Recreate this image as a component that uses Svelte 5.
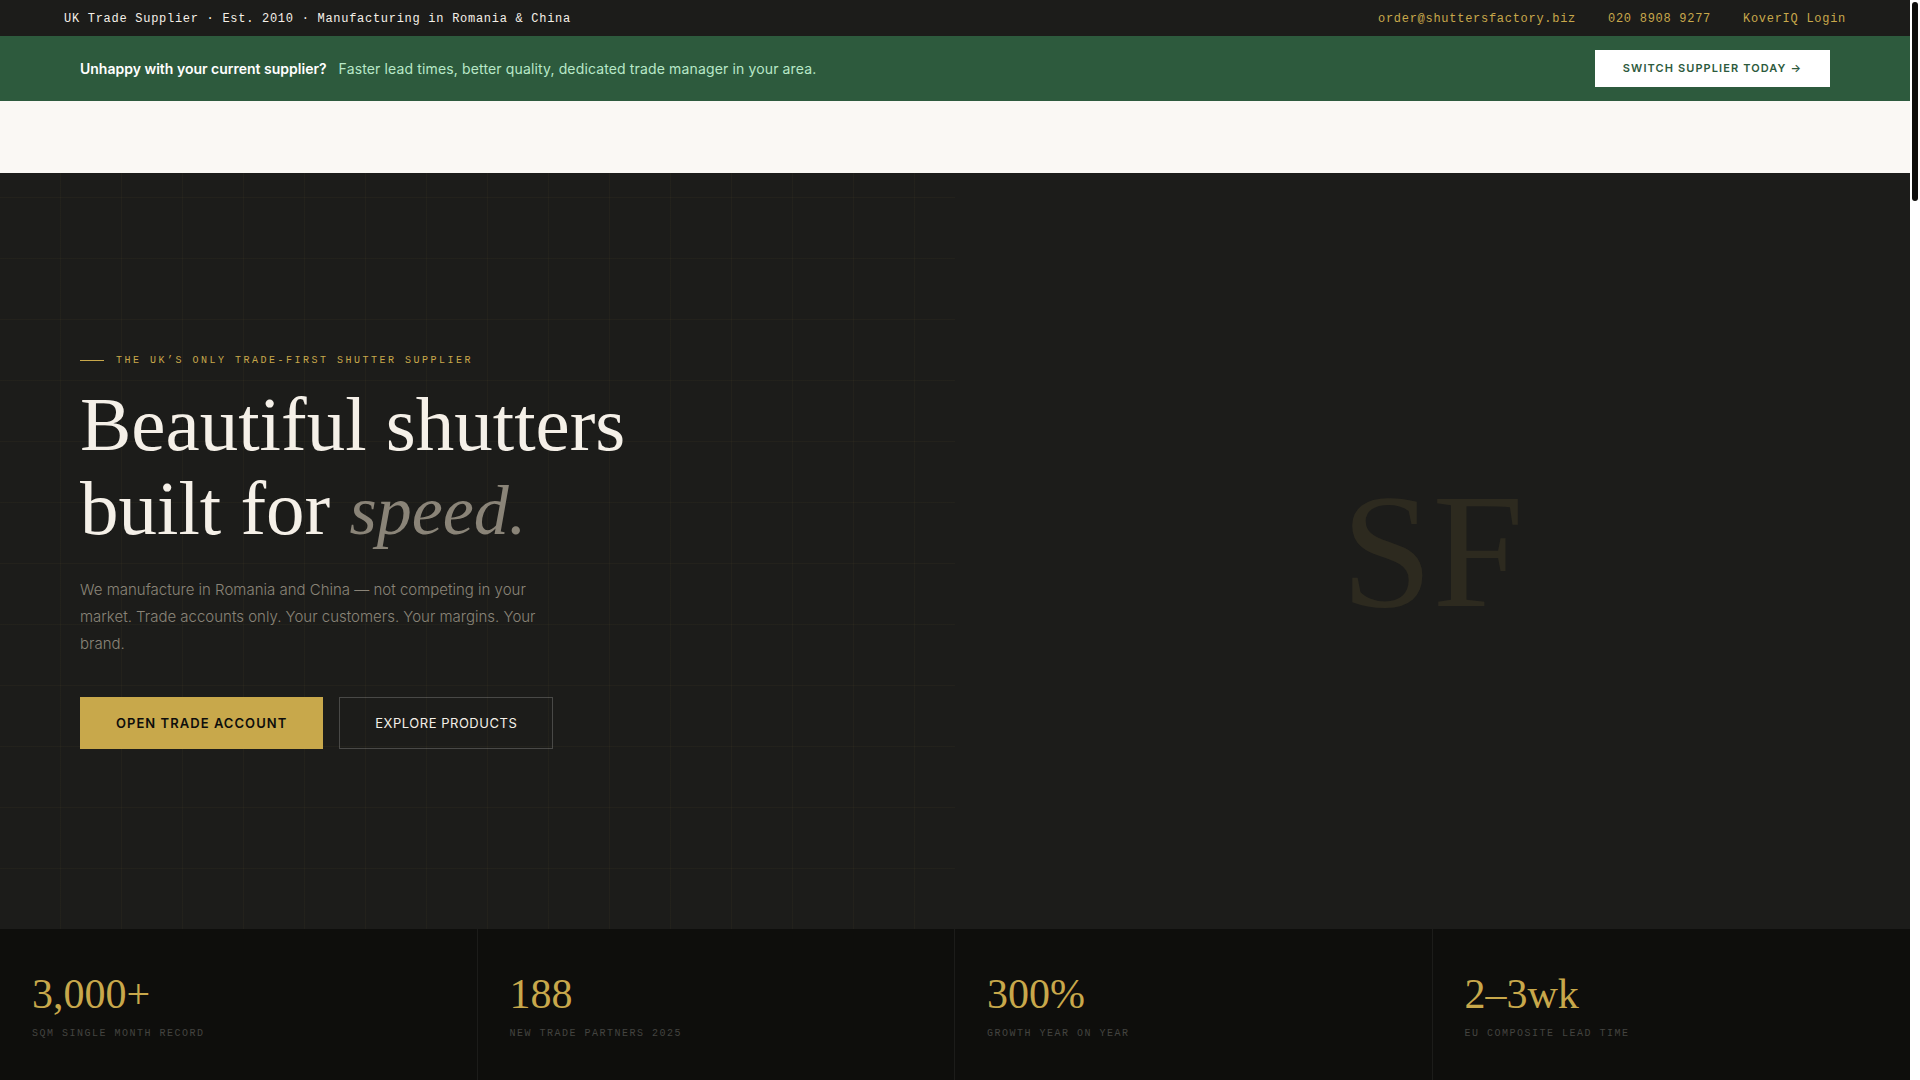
<script lang="ts">
  const contactLinks = [
    { label: 'order@shuttersfactory.biz', href: 'mailto:order@shuttersfactory.biz' },
    { label: '020 8908 9277', href: 'tel:02089089277' },
    { label: 'KoverIQ Login', href: '#login' },
  ];

  const stats = [
    { value: '3,000+', label: 'SQM single month record' },
    { value: '188', label: 'New trade partners 2025' },
    { value: '300%', label: 'Growth year on year' },
    { value: '2–3wk', label: 'EU composite lead time' },
  ];
</script>

<div class="shell">
  <div class="page">
    <div class="topbar">
      <span>UK Trade Supplier · Est. 2010 · Manufacturing in Romania &amp; China</span>
      <div class="topbar__links">
        {#each contactLinks as link}
          <a href={link.href}>{link.label}</a>
        {/each}
      </div>
    </div>

    <div class="switch">
      <p class="switch__text">
        <strong>Unhappy with your current supplier?</strong>
        <span>Faster lead times, better quality, dedicated trade manager in your area.</span>
      </p>
      <a class="switch__button" href="#switch">Switch supplier today →</a>
    </div>

    <header class="nav"></header>

    <section class="hero">
      <div class="hero__left">
        <div class="eyebrow">The UK’s only trade-first shutter supplier</div>
        <h1>Beautiful shutters<br />built for <em>speed.</em></h1>
        <p class="hero__sub">
          We manufacture in Romania and China — not competing in your market. Trade accounts only.
          Your customers. Your margins. Your brand.
        </p>
        <div class="hero__actions">
          <a class="btn btn--gold" href="#account">Open trade account</a>
          <a class="btn btn--outline" href="#products">Explore products</a>
        </div>
      </div>
      <div class="hero__right">
        <span class="monogram">SF</span>
      </div>
    </section>

    <section class="stats">
      {#each stats as stat}
        <div class="stat">
          <div class="stat__value">{stat.value}</div>
          <div class="stat__label">{stat.label}</div>
        </div>
      {/each}
    </section>
  </div>

  <div class="scroll" aria-hidden="true">
    <div class="scroll__thumb"></div>
  </div>
</div>

<style>
  :global(body) {
    background: #fff;
  }

  .shell {
    --ink: #1c1c1a;
    --black: #0e0e0c;
    --gold: #c8a84b;
    --cream: #f5f0e8;
    --muted: #8a8478;
    --sans: Inter, 'Open Sans', sans-serif;
    --serif: 'Liberation Serif', serif;
    --mono: 'Liberation Mono', monospace;

    display: grid;
    grid-template-columns: minmax(0, 1fr) 10px;
    min-height: 100vh;
    font-family: var(--sans);
  }

  a {
    text-decoration: none;
  }

  .page {
    display: flex;
    flex-direction: column;
  }

  .topbar {
    display: flex;
    justify-content: space-between;
    align-items: center;
    padding: 11px 64px 9px;
    background: var(--ink);
    color: var(--cream);
    font-family: var(--mono);
    font-size: 12px;
    line-height: 16px;
    letter-spacing: 0.06em;
  }

  .topbar__links {
    display: flex;
    gap: 32px;
  }

  .topbar__links a {
    color: var(--gold);
  }

  .switch {
    display: flex;
    justify-content: space-between;
    align-items: center;
    padding: 14px 80px;
    background: #2d5a3d;
  }

  .switch__text {
    display: flex;
    gap: 12px;
    margin: 0;
    color: #b8e8c8;
    font-size: 14px;
    line-height: 24px;
    letter-spacing: 0.01em;
  }

  .switch__text strong {
    color: #fff;
    font-weight: 600;
    letter-spacing: 0;
  }

  .switch__button {
    padding: 10px 28px;
    background: #fff;
    color: #2d5a3d;
    font-size: 11px;
    font-weight: 600;
    line-height: 17px;
    letter-spacing: 0.1em;
    text-transform: uppercase;
  }

  .nav {
    box-sizing: border-box;
    height: 72px;
    background: #faf8f4;
  }

  .hero {
    display: grid;
    grid-template-columns: 1fr 1fr;
    min-height: 70vh;
    background: var(--ink);
  }

  .hero__left {
    display: flex;
    flex-direction: column;
    justify-content: center;
    padding: 0 80px;
    background-image:
      repeating-linear-gradient(0deg, transparent 0 60px, rgba(200, 168, 75, 0.04) 60px 61px),
      repeating-linear-gradient(90deg, transparent 0 60px, rgba(200, 168, 75, 0.04) 60px 61px);
  }

  .eyebrow {
    display: flex;
    align-items: center;
    gap: 12px;
    margin-bottom: 14px;
    color: var(--gold);
    font-family: var(--mono);
    font-size: 10px;
    line-height: 14px;
    letter-spacing: 0.25em;
    text-transform: uppercase;
  }

  .eyebrow::before {
    content: '';
    width: 24px;
    height: 1px;
    background: var(--gold);
  }

  h1 {
    margin: 0 0 26px;
    color: var(--cream);
    font-family: var(--serif);
    font-size: 77px;
    font-weight: 300;
    line-height: 84px;
  }

  h1 em {
    color: var(--muted);
    font-size: 70px;
    line-height: 1;
  }

  .hero__sub {
    max-width: 480px;
    margin: 0 0 40px;
    color: var(--muted);
    font-size: 15px;
    font-weight: 300;
    line-height: 27px;
  }

  .hero__actions {
    display: flex;
    gap: 16px;
  }

  .btn {
    padding: 15px 35px;
    border: 1px solid var(--gold);
    font-size: 13px;
    line-height: 20px;
    text-transform: uppercase;
  }

  .btn--gold {
    background: var(--gold);
    color: var(--black);
    font-weight: 600;
    letter-spacing: 0.08em;
  }

  .btn--outline {
    border-color: rgba(255, 255, 255, 0.2);
    color: var(--cream);
    letter-spacing: 0.04em;
  }

  .hero__right {
    display: flex;
    align-items: center;
    justify-content: center;
  }

  .monogram {
    color: rgba(200, 168, 75, 0.1);
    font-family: var(--serif);
    font-size: 164px;
    line-height: 1;
  }

  .stats {
    flex: 1;
    display: grid;
    grid-template-columns: repeat(4, 1fr);
    background: var(--black);
  }

  .stat {
    padding: 41px 32px 36px;
    border-right: 1px solid rgba(255, 255, 255, 0.06);
  }

  .stat:last-child {
    border-right: 0;
  }

  .stat__value {
    margin-bottom: 8px;
    color: var(--gold);
    font-family: var(--serif);
    font-size: 42px;
    line-height: 48px;
  }

  .stat__label {
    color: #444440;
    font-family: var(--mono);
    font-size: 10px;
    line-height: 16px;
    letter-spacing: 0.15em;
    text-transform: uppercase;
  }

  .scroll {
    padding: 2px;
    background: #fff;
  }

  .scroll__thumb {
    height: 199px;
    border-radius: 3px;
    background: var(--black);
  }
</style>
